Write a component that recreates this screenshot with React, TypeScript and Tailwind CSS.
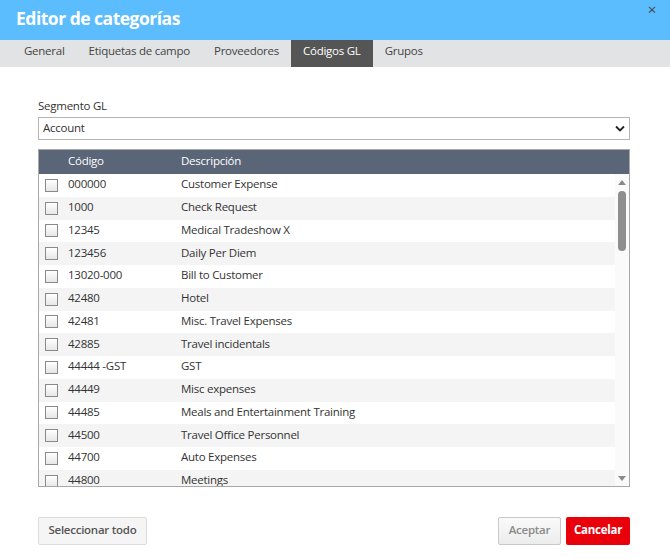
import React from "react";

const rows: [string, string][] = [
  ["000000", "Customer Expense"],
  ["1000", "Check Request"],
  ["12345", "Medical Tradeshow X"],
  ["123456", "Daily Per Diem"],
  ["13020-000", "Bill to Customer"],
  ["42480", "Hotel"],
  ["42481", "Misc. Travel Expenses"],
  ["42885", "Travel incidentals"],
  ["44444 -GST", "GST"],
  ["44449", "Misc expenses"],
  ["44485", "Meals and Entertainment Training"],
  ["44500", "Travel Office Personnel"],
  ["44700", "Auto Expenses"],
  ["44800", "Meetings"],
];

const tabs = ["General", "Etiquetas de campo", "Proveedores", "Códigos GL", "Grupos"];

export default function App() {
  return (
    <div
      className="w-[670px] h-[560px] bg-white overflow-hidden text-[#333] tracking-[-0.25px]"
      style={{ fontFamily: '"Open Sans", "Noto Sans", sans-serif' }}
    >
      <div className="h-[40px] bg-[#5bbcfe] flex items-center pl-[16px] pb-[3px] relative">
        <span className="text-white font-bold text-[17.5px] tracking-[-0.5px]">Editor de categorías</span>
        <span className="absolute right-[14px] top-[0px] text-[#444] text-[15px] leading-[18px]">×</span>
      </div>
      <div className="h-[27px] bg-[#e2e3e5] flex items-stretch pl-[12px] text-[11.5px] text-[#444]">
        {tabs.map((t) => (
          <div
            key={t}
            className={
              t === "Códigos GL"
                ? "px-[12px] pb-[5px] flex items-center bg-[#555555] text-white"
                : "px-[12px] pb-[5px] flex items-center"
            }
          >
            {t}
          </div>
        ))}
      </div>
      <div className="pl-[38px] pr-[40px] pt-[31px]">
        <div className="text-[11.5px] leading-[16px] text-[#333]">Segmento GL</div>
        <div className="mt-[3px] h-[23px] border border-[#b5b5b5] flex items-center justify-between pl-[4px] pr-[4px] pb-[2px] text-[11.5px]">
          <span>Account</span>
          <svg width="10" height="7" viewBox="0 0 10 7" className="mt-[2px]">
            <path d="M1 1.5 L5 5.5 L9 1.5" stroke="#222" strokeWidth="1.8" fill="none" />
          </svg>
        </div>
        <div className="mt-[9px] border border-[#a8a8a8]">
          <div className="h-[24px] bg-[#5a6577] flex items-center pb-[2px] text-white text-[11.5px]">
            <span className="w-[142px] pl-[29px]">Código</span>
            <span>Descripción</span>
          </div>
          <div className="h-[312px] flex overflow-hidden">
            <div className="flex-1 overflow-hidden">
              {rows.map(([c, d], i) => (
                <div
                  key={c}
                  className={
                    (i % 2 === 1 ? "bg-[#f4f4f4] " : "bg-white ") +
                    "h-[22.75px] flex items-center text-[11.5px] text-[#333] shrink-0"
                  }
                >
                  <span className="ml-[6px] w-[13px] h-[13px] border border-[#8a8a8a] bg-gradient-to-b from-white to-[#e6e6e6]" />
                  <span className="ml-[10px] w-[113px] mb-[3px]">{c}</span>
                  <span className="mb-[3px]">{d}</span>
                </div>
              ))}
            </div>
            <div className="w-[14px] bg-[#fafafa] flex flex-col items-center relative">
              <svg className="mt-[6px]" width="8" height="5" viewBox="0 0 8 5">
                <path d="M0 5 L4 0 L8 5 Z" fill="#8a8a8a" />
              </svg>
              <div className="mt-[6px] w-[8px] h-[60px] rounded-[4px] bg-[#8e8e8e]" />
              <svg className="absolute bottom-[5px]" width="8" height="5" viewBox="0 0 8 5">
                <path d="M0 0 L8 0 L4 5 Z" fill="#8a8a8a" />
              </svg>
            </div>
          </div>
        </div>
        <div className="mt-[30px] flex items-center">
          <button className="h-[28px] w-[109px] pb-[2px] whitespace-nowrap bg-[#f5f5f5] border border-[#dcdcdc] rounded-[2px] text-[11.5px] font-semibold text-[#555]">
            Seleccionar todo
          </button>
          <div className="flex-1" />
          <button className="h-[28px] w-[63px] pb-[2px] bg-gradient-to-b from-[#fafafa] to-[#ececec] border border-[#c9c9c9] rounded-[2px] text-[11.5px] font-semibold text-[#8a8a8a]">
            Aceptar
          </button>
          <button className="ml-[5px] h-[28px] w-[64px] pb-[2px] bg-[#e8000b] rounded-[2px] text-[11.5px] font-bold text-white">
            Cancelar
          </button>
        </div>
      </div>
    </div>
  );
}
